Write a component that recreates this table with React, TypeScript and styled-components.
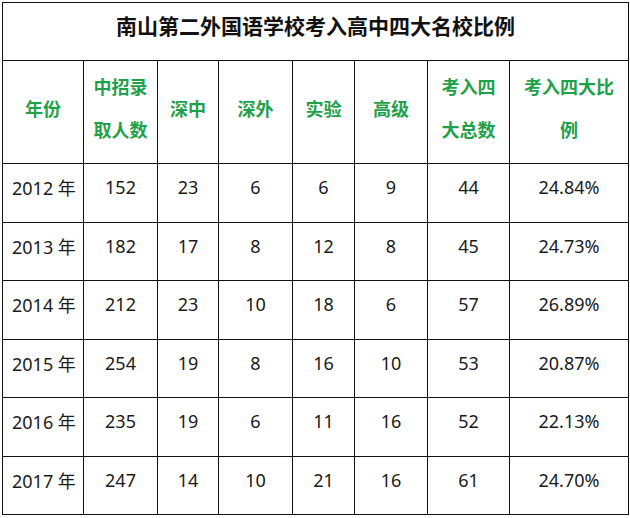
import React from "react";
import styled, { createGlobalStyle } from "styled-components";

const GlobalStyle = createGlobalStyle`
  html, body {
    margin: 0;
    padding: 0;
    background: #ffffff;
  }
`;

const columns = [81, 74, 61, 74, 62, 73, 82, 119];

const headers: string[][] = [
  ["年份"],
  ["中招录", "取人数"],
  ["深中"],
  ["深外"],
  ["实验"],
  ["高级"],
  ["考入四", "大总数"],
  ["考入四大比", "例"],
];

const rows: (string | number)[][] = [
  ["2012 年", 152, 23, 6, 6, 9, 44, "24.84%"],
  ["2013 年", 182, 17, 8, 12, 8, 45, "24.73%"],
  ["2014 年", 212, 23, 10, 18, 6, 57, "26.89%"],
  ["2015 年", 254, 19, 8, 16, 10, 53, "20.87%"],
  ["2016 年", 235, 19, 6, 11, 16, 52, "22.13%"],
  ["2017 年", 247, 14, 10, 21, 16, 61, "24.70%"],
];

const App: React.FC = () => {
  return (
    <Page>
      <GlobalStyle />
      <Table>
        <colgroup>
          {columns.map((w, i) => (
            <col key={i} style={{ width: w }} />
          ))}
        </colgroup>
        <tbody>
          <TitleRow>
            <TitleCell colSpan={8}>南山第二外国语学校考入高中四大名校比例</TitleCell>
          </TitleRow>
          <HeaderRow>
            {headers.map((lines, i) => (
              <HeaderCell key={i}>
                {lines.map((l, j) => (
                  <HeaderLine key={j}>{l}</HeaderLine>
                ))}
              </HeaderCell>
            ))}
          </HeaderRow>
          {rows.map((row, i) => (
            <DataRow key={i} $tall={i % 2 === 0}>
              {row.map((v, j) => (
                <DataCell key={j} $first={j === 0}>
                  {v}
                </DataCell>
              ))}
            </DataRow>
          ))}
        </tbody>
      </Table>
    </Page>
  );
};

export default App;

const Page = styled.div`
  padding: 2px 0 0 2px;
  width: 630px;
  box-sizing: border-box;
`;

const Table = styled.table`
  width: 627px;
  border-collapse: collapse;
  table-layout: fixed;
  border: 1.5px solid #111;
  font-family: "Noto Sans", "Noto Sans CJK SC", sans-serif;

  td {
    border: 1px solid #111;
  }
`;

const TitleRow = styled.tr`
  height: 58px;
`;

const TitleCell = styled.td`
  text-align: center;
  vertical-align: middle;
  padding: 0 0 13px;
  font-family: "Noto Sans CJK SC", sans-serif;
  font-size: 21px;
  font-weight: 700;
  color: #111;
`;

const HeaderRow = styled.tr`
  height: 103px;
`;

const HeaderCell = styled.td`
  text-align: center;
  vertical-align: middle;
  padding: 0 0 8px;
  font-family: "Noto Sans CJK SC", sans-serif;
  font-size: 18px;
  font-weight: 700;
  color: #1fa04a;
`;

const HeaderLine = styled.div`
  line-height: 43px;
  white-space: nowrap;
`;

const DataRow = styled.tr<{ $tall: boolean }>`
  height: ${({ $tall }) => ($tall ? "59px" : "58px")};
`;

const DataCell = styled.td<{ $first: boolean }>`
  text-align: ${({ $first }) => ($first ? "left" : "center")};
  vertical-align: middle;
  padding: 0 0 12px ${({ $first }) => ($first ? "9px" : "0")};
  font-size: 18px;
  color: #1a1a1a;
  white-space: nowrap;
`;
